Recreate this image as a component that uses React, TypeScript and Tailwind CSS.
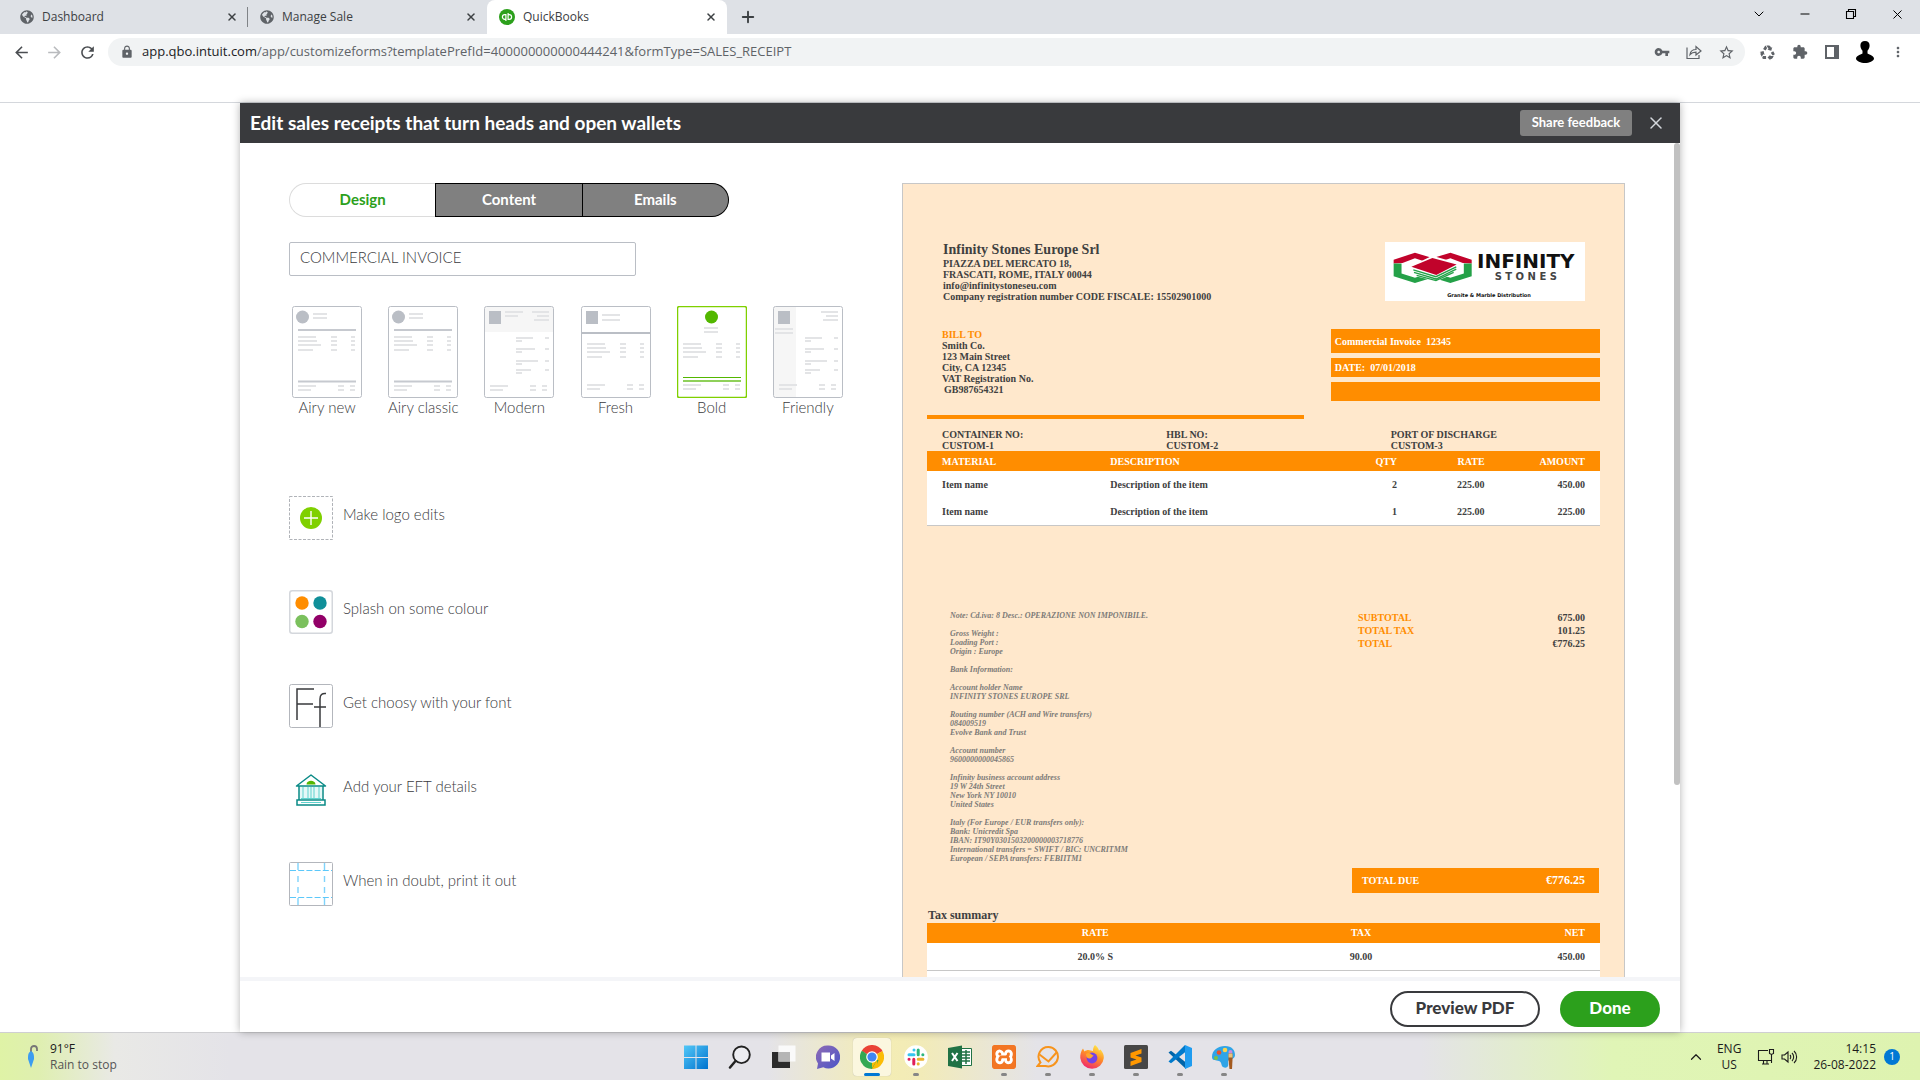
import React from 'react';
import {
  MdArrowBack,
  MdArrowForward,
  MdExtension,
  MdLock,
  MdMoreVert,
  MdRecycling,
  MdRefresh,
  MdStarBorder,
  MdVpnKey,
} from 'react-icons/md';
import { FaGlobeAmericas } from 'react-icons/fa';
import { SiXampp } from 'react-icons/si';
import { ChevronDown, ChevronUp, Minus, Plus, X } from 'lucide-react';

/* ---------- Browser ---------- */

function QuickBooksIcon() {
  return (
    <svg viewBox="0 0 16 16" className="size-4 shrink-0">
      <circle cx="8" cy="8" r="8" fill="#2ca01c" />
      <g fill="none" stroke="#fff" strokeWidth="1.2">
        <path d="M6.900 10.300H5.700a2.300 2.300 0 0 1 0-4.600h.6M6.900 5.100v6.900M9.100 5.700h1.200a2.300 2.300 0 0 1 0 4.600h-.6M9.100 10.900V4" />
      </g>
    </svg>
  );
}

function Tab({ title, kind }: { title: string; kind: 'first' | 'plain' | 'active' }) {
  return (
    <div
      className={
        kind === 'active'
          ? 'flex w-60 items-center rounded-t-lg bg-white pr-2 pl-3'
          : kind === 'first'
            ? 'flex w-[248px] items-center bg-[linear-gradient(#808387,#808387)] bg-[length:1px_20px] bg-right bg-no-repeat pr-2 pl-5'
            : 'flex w-[239px] items-center pr-2 pl-3'
      }
    >
      {kind === 'active' ? <QuickBooksIcon /> : <FaGlobeAmericas className="size-3.5 shrink-0 text-[#5f6368]" />}
      <span className="ml-2 flex-1 text-xs text-[#3c4043]">{title}</span>
      <button aria-label={'Close ' + title} className="flex size-4 items-center justify-center text-[#3c4043]">
        <X size={12} strokeWidth={3} />
      </button>
    </div>
  );
}

function TabStrip() {
  return (
    <div className="flex h-[34px] shrink-0 bg-[#dee1e6]">
      <Tab title="Dashboard" kind="first" />
      <Tab title="Manage Sale" kind="plain" />
      <Tab title="QuickBooks" kind="active" />
      <button aria-label="New tab" className="ml-3 text-[#3c4043]">
        <Plus size={18} strokeWidth={2.5} />
      </button>
      <div className="ml-auto flex h-7 items-center text-black">
        <button aria-label="Search tabs" className="flex w-[46px] justify-center">
          <ChevronDown size={16} strokeWidth={1.5} />
        </button>
        <button aria-label="Minimise" className="flex w-[46px] justify-center">
          <Minus size={14} strokeWidth={1.7} />
        </button>
        <button aria-label="Restore" className="flex w-[46px] justify-center">
          <svg viewBox="0 0 12 12" className="size-3" fill="none" stroke="currentColor" strokeWidth="1.1">
            <path d="M1.5 3.5h7v7h-7zM3.5 3.5v-2h7v7h-2" />
          </svg>
        </button>
        <button aria-label="Close window" className="flex w-[46px] justify-center">
          <X size={15} strokeWidth={1.6} />
        </button>
      </div>
    </div>
  );
}

function Toolbar() {
  return (
    <div className="flex h-9 shrink-0 items-center text-[#5f6368]">
      <div className="flex w-[108px] items-center gap-3.5 pl-3">
        <button aria-label="Back"><MdArrowBack size={19} className="text-[#4a4d51]" /></button>
        <button aria-label="Forward"><MdArrowForward size={19} className="text-[#b9bbbe]" /></button>
        <button aria-label="Reload"><MdRefresh size={19} className="text-[#4a4d51]" /></button>
      </div>
      <div className="flex h-7 flex-1 items-center rounded-full bg-[#f1f3f4] pr-2.5 pl-3">
        <MdLock size={14} />
        <span className="ml-2 flex-1 text-[13px]">
          <span className="text-[#202124]">app.qbo.intuit.com</span>
          /app/customizeforms?templatePrefId=400000000000444241&amp;formType=SALES_RECEIPT
        </span>
        <div className="flex items-center gap-4">
          <MdVpnKey size={16} />
          <svg viewBox="0 0 16 16" className="size-4" fill="none" stroke="currentColor" strokeWidth="1.2">
            <path d="M1 3.5V14.500h12V11M4 10.500c.5-3.500 2.500-5 6-5V2.500l5 4.500-5 4V8.200c-2.500 0-4.500.6-6 2.300z" />
          </svg>
          <MdStarBorder size={17} />
        </div>
      </div>
      <div className="flex items-center gap-4 pr-3.5 pl-3.5">
        <MdRecycling size={17} />
        <MdExtension size={16} />
        <svg viewBox="0 0 16 16" className="size-4" fill="none" stroke="currentColor" strokeWidth="2">
          <path d="M2 2h12v12H2z" />
          <path d="M10 2h4v12h-4z" fill="currentColor" stroke="none" />
        </svg>
        <svg viewBox="0 0 18 22" className="h-[22px] w-[18px] text-black" fill="currentColor">
          <path d="M9 0c3 0 4.800 1.700 4.600 4.800-.1 2-1 3.700-2.100 5v2.400c0 1.200 6.500 2 6.500 5.300C18 20 13 22 9 22s-9-2-9-4.500c0-3.300 6.500-4.100 6.500-5.300V9.800c-1.100-1.300-2-3-2.100-5C4.200 1.700 6 0 9 0z" />
        </svg>
        <MdMoreVert size={16} />
      </div>
    </div>
  );
}

/* ---------- Template thumbnails ---------- */

type Bar = [number, number, number];

const SHORT: Bar[] = [
  [6, 31, 18], [6, 35, 19], [6, 39, 23], [6, 44, 15],
  [39, 31, 6], [39, 35, 6], [39, 39, 6], [39, 44, 6],
  [59, 31, 4], [59, 35, 4], [59, 39, 4], [59, 44, 4],
];
const FOOT: Bar[] = [[6, 80, 18], [6, 84, 13], [46, 80, 6], [46, 84, 6], [58, 80, 5], [58, 84, 5]];
const SIDE: Bar[] = [
  [48, 6, 17], [53, 10, 12], [50, 14, 15],
  [32, 32, 17], [32, 35, 6], [32, 43, 19], [32, 46, 6],
  [32, 55, 22], [32, 58, 6], [32, 64, 15], [32, 67, 6],
  [61, 32, 4], [61, 43, 4], [61, 55, 4], [61, 64, 4],
];

function Bars({ items, dy = 0 }: { items: Bar[]; dy?: number }) {
  return (
    <g fill="#e3e4e6">
      {items.map(([x, y, w]) => (
        <rect key={x + '-' + y} x={x} y={y + dy - 1} width={w} height="2" />
      ))}
    </g>
  );
}

function Thumb({ name }: { name: string }) {
  const bold = name === 'Bold';
  return (
    <svg viewBox="0 0 70 92" className="h-[92px] w-[70px]">
      <rect x=".5" y=".5" width="69" height="91" rx="2" fill="#fff" />
      {name.startsWith('Airy') && (
        <>
          <circle cx="10.500" cy="11" r="6.500" fill="#babec5" />
          <Bars items={[[21, 8, 14], [21, 12, 14]]} />
          <path d="M6 24h58M6 75.500h58" stroke="#c6c9cf" strokeWidth="2" />
          <Bars items={SHORT} />
          <Bars items={FOOT} />
        </>
      )}
      {name === 'Modern' && (
        <>
          <path d="M1 1h68v25H1z" fill="#f6f6f6" />
          <path d="M5 5h12v13H5z" fill="#babec5" />
          <Bars items={[[21, 6, 18], [21, 10, 13]]} />
          <Bars items={SIDE} />
          <Bars items={FOOT} />
        </>
      )}
      {name === 'Fresh' && (
        <>
          <path d="M5 5h12v13H5z" fill="#babec5" />
          <Bars items={[[21, 9, 18], [21, 14, 18]]} />
          <path d="M0 27h70" stroke="#babec5" strokeWidth="2" />
          <Bars items={SHORT} dy={7} />
          <Bars items={FOOT} dy={-1} />
        </>
      )}
      {bold && (
        <>
          <circle cx="34.500" cy="11" r="6.500" fill="#53b700" />
          <Bars items={[[27, 22, 14], [27, 26, 14]]} />
          <Bars items={SHORT} dy={7} />
          <path d="M6 71.500h58" stroke="#53b700" />
          <path d="M6 75h58" stroke="#8fd05a" strokeWidth="2" />
          <Bars items={FOOT} dy={-1} />
        </>
      )}
      {name === 'Friendly' && (
        <>
          <path d="M1 1h22v90H1z" fill="#f6f6f6" />
          <path d="M5 5h12v13H5z" fill="#babec5" />
          <Bars items={[[2, 23, 18], [2, 27, 18]]} />
          <Bars items={SIDE} />
          <Bars items={FOOT} dy={-1} />
        </>
      )}
      <rect x=".5" y=".5" width="69" height="91" rx="2" fill="none" stroke={bold ? '#7fd000' : '#babec5'} strokeWidth={bold ? 1.5 : 1} />
    </svg>
  );
}

const TEMPLATES = ['Airy new', 'Airy classic', 'Modern', 'Fresh', 'Bold', 'Friendly'];

/* ---------- Design actions ---------- */

function LogoEditIcon() {
  return (
    <svg viewBox="0 0 44 44" className="size-11">
      <rect x=".5" y=".5" width="43" height="43" fill="none" stroke="#b0b3b8" strokeDasharray="3 1.500" />
      <circle cx="22" cy="22" r="11" fill="#7fd000" />
      <path d="M15 22h14M22 15v14" stroke="#fff" strokeWidth="1.400" />
    </svg>
  );
}

function ColourIcon() {
  return (
    <svg viewBox="0 0 44 44" className="size-11">
      <rect x=".75" y=".75" width="42.500" height="42.500" rx="2.500" fill="#fff" stroke="#d4d7dc" strokeWidth="1.500" />
      <circle cx="13" cy="13" r="6.700" fill="#ff8d00" />
      <circle cx="31" cy="13" r="6.700" fill="#108f99" />
      <circle cx="13" cy="31.500" r="6.700" fill="#7bc05d" />
      <circle cx="31" cy="31.500" r="6.700" fill="#920068" />
    </svg>
  );
}

function FontIcon() {
  return (
    <svg viewBox="0 0 44 44" className="size-11" fill="none">
      <rect x=".5" y=".5" width="43" height="43" rx="2" fill="#fff" stroke="#b3b6bc" />
      <g stroke="#393a3d" strokeWidth="1.500">
        <path d="M8 36V5h17M8 20h16M25 23h12" />
        <path d="M31 43V15c0-4 2-6 6-5.500" />
      </g>
    </svg>
  );
}

function BankIcon() {
  return (
    <svg viewBox="0 0 44 44" className="size-11" fill="none">
      <path d="M10 18h23v14H10z" fill="#e4f8f7" />
      <path d="M22 7 7.500 18h29z" fill="#fff" stroke="#0a8a86" strokeWidth="1.500" strokeLinejoin="round" />
      <path d="M17.500 16.500c0-5 9-5 9 0z" fill="#53b700" />
      <path d="M10 18v14M34 18v14M8 32h28v5H8z" stroke="#0a8a86" strokeWidth="1.500" />
      <path d="M14 19v12M19 19v12M22 19v12M25 19v12M30 19v12M12 30.500h20M12 34.500h20" stroke="#5fd3cf" />
    </svg>
  );
}

function PrintIcon() {
  return (
    <svg viewBox="0 0 44 44" className="size-11" fill="none">
      <rect x=".5" y=".5" width="43" height="43" rx="1" fill="#fff" stroke="#b3b6bc" />
      <path d="M1 8.500h42M1 35.500h42" stroke="#5cc8fa" strokeDasharray="6 2.200" strokeWidth="1.200" />
      <path d="M9 1v7M9 14v6M9 25v6M9 36v7M35.500 1v7M35.500 14v6M35.500 25v6M35.500 36v7" stroke="#7fd3fb" strokeWidth="1.400" />
    </svg>
  );
}

function DesignPanel() {
  return (
    <section>
      <div role="tablist" className="flex h-[34px] w-[440px] text-[15px] font-bold">
        <button role="tab" aria-selected="true" className="flex-1 rounded-l-full border border-r-0 border-[#dcdcdc] bg-white pb-0.5 text-[#2ca01c]">
          Design
        </button>
        <button role="tab" aria-selected="false" className="flex-1 border border-black bg-[#808080] pb-0.5 text-white">
          Content
        </button>
        <button role="tab" aria-selected="false" className="flex-1 rounded-r-full border border-l-0 border-black bg-[#808080] pb-0.5 text-white">
          Emails
        </button>
      </div>
      <input
        aria-label="Template name"
        defaultValue="COMMERCIAL INVOICE"
        className="mt-[25px] block h-[34px] w-[347px] rounded-[2px] border border-[#babec5] bg-white px-2.5 pb-1 text-[15px] font-light text-[#393a3d]"
      />
      <div className="mt-[30px] -ml-2.5 grid w-[577px] grid-cols-6 text-[15px] font-light text-[#393a3d]">
        {TEMPLATES.map((name) => (
          <button key={name} className="flex flex-col items-center whitespace-nowrap">
            <Thumb name={name} />
            <span className="leading-[18px]">{name}</span>
          </button>
        ))}
      </div>
      <div className="mt-20 flex flex-col items-start text-[15px] font-light text-[#393a3d]">
        <button className="mb-[50px] flex gap-2.5"><LogoEditIcon /><span className="leading-9">Make logo edits</span></button>
        <button className="mb-[50px] flex gap-2.5"><ColourIcon /><span className="leading-9">Splash on some colour</span></button>
        <button className="mb-10 flex gap-2.5"><FontIcon /><span className="leading-9">Get choosy with your font</span></button>
        <button className="mb-[50px] flex gap-2.5"><BankIcon /><span className="leading-9">Add your EFT details</span></button>
        <button className="flex gap-2.5"><PrintIcon /><span className="leading-9">When in doubt, print it out</span></button>
      </div>
    </section>
  );
}

/* ---------- Invoice preview ---------- */

function CompanyLogo() {
  return (
    <div className="flex h-[59px] w-[200px] flex-col items-center overflow-hidden bg-white text-[#111]">
      <div className="flex h-[50px] w-full items-center gap-1 pl-2">
        <svg viewBox="278 243 244 94" className="h-[31px] w-20 shrink-0">
          <path d="M280 266 345 245l56 17-22 11-34-11-38 14-27 2zM518 266 453 245l-56 17 22 11 34-11 38 14 27 2z" fill="#c1032b" />
          <path d="M280 278h24v30l41 13 28-9 22 10-50 15-65-20zM518 278h-24v30l-41 13-28-9-22 10 50 15 65-20z" fill="#24a148" />
          <path d="M328 288l70-34 82 24v24l-70 30-66-16z" fill="#fff" />
          <path d="M340 297l69 21 62-30M342 305l67 20 62-30M350 314l59 16 54-25" fill="none" stroke="#24a148" strokeWidth="4" />
          <path d="M334 288l64-27 74 20-62 32z" fill="#c1032b" />
        </svg>
        <div className="flex flex-col items-center font-['DejaVu_Sans'] font-bold">
          <span className="text-[20px] leading-5">INFINITY</span>
          <span className="text-[10px] leading-[12px] text-[#444]">S T O N E S</span>
        </div>
      </div>
      <span className="pl-2 font-['DejaVu_Sans'] text-[5px] leading-[7px] font-bold">Granite &amp; Marble Distribution</span>
    </div>
  );
}

const NOTES = `Note: Cd.iva: 8 Desc.: OPERAZIONE NON IMPONIBILE.

Gross Weight :
Loading Port :
Origin : Europe

Bank Information:

Account holder Name
INFINITY STONES EUROPE SRL

Routing number (ACH and Wire transfers)
084009519
Evolve Bank and Trust

Account number
9600000000045865

Infinity business account address
19 W 24th Street
New York NY 10010
United States

Italy (For Europe / EUR transfers only):
Bank: Unicredit Spa
IBAN: IT90Y0301503200000003718776
International transfers = SWIFT / BIC: UNCRITMM
European / SEPA transfers: FEBIITM1`;

function Invoice() {
  return (
    <article className="border border-[#c7c7c7] bg-[#ffe8cc] px-6 pt-[57px] pb-10 font-['Liberation_Serif'] text-[10px] leading-[11px] font-bold text-[#404040]">
      <header className="flex justify-between pr-[15px] pl-4">
        <div className="pt-px">
          <h2 className="text-sm leading-4">Infinity Stones Europe Srl</h2>
          <p>PIAZZA DEL MERCATO 18,</p>
          <p>FRASCATI, ROME, ITALY 00044</p>
          <p>info@infinitystoneseu.com</p>
          <p>Company registration number CODE FISCALE: 15502901000</p>
        </div>
        <div className="pt-px"><CompanyLogo /></div>
      </header>

      <div className="mt-[26px] flex items-start justify-between pt-px">
        <address className="pl-[15px] not-italic">
          <p className="text-[#ff8d00]">BILL TO</p>
          <p>Smith Co.</p>
          <p>123 Main Street</p>
          <p>City, CA 12345</p>
          <p>VAT Registration No.</p>
          <p className="pl-0.5">GB987654321</p>
        </address>
        <div className="flex w-2/5 flex-col gap-[5px] text-white">
          <p className="h-6 bg-[#ff8d00] px-1 leading-[26px] whitespace-pre">Commercial Invoice  12345</p>
          <p className="h-[19px] bg-[#ff8d00] px-1 leading-5 whitespace-pre">DATE:  07/01/2018</p>
          <p className="h-[19px] bg-[#ff8d00]" />
        </div>
      </div>

      <div className="mt-3.5 h-1 w-14/25 bg-[#ff8d00]" />

      <div className="mt-2.5 grid grid-cols-3 [&>p]:pl-[15px]">
        <p>CONTAINER NO:<br />CUSTOM-1</p>
        <p>HBL NO:<br />CUSTOM-2</p>
        <p>PORT OF DISCHARGE<br />CUSTOM-3</p>
      </div>

      <table className="w-full table-fixed border-b border-[#c7c7c7] bg-white text-right">
        <colgroup>
          <col className="w-1/4" />
          <col className="w-[30%]" />
          <col className="w-[15%]" />
          <col className="w-[13%]" />
          <col />
        </colgroup>
        <thead>
          <tr className="h-5 bg-[#ff8d00] text-white">
            <th className="pl-[15px] text-left">MATERIAL</th>
            <th className="pl-[15px] text-left">DESCRIPTION</th>
            <th className="pr-px">QTY</th>
            <th className="pr-px">RATE</th>
            <th className="pr-[15px]">AMOUNT</th>
          </tr>
        </thead>
        <tbody>
          {[['2', '450.00'], ['1', '225.00']].map(([qty, amount]) => (
            <tr key={qty} className="h-[27px]">
              <td className="pl-[15px] text-left">Item name</td>
              <td className="pl-[15px] text-left">Description of the item</td>
              <td className="pr-px">{qty}</td>
              <td className="pr-px">225.00</td>
              <td className="pr-[15px]">{amount}</td>
            </tr>
          ))}
        </tbody>
      </table>

      <div className="mt-[85px] flex items-start justify-between pr-[15px] pl-[23px]">
        <p className="text-[8px] leading-[9px] whitespace-pre text-[#7d7b78] italic">{NOTES}</p>
        <dl className="grid w-[227px] grid-cols-2 leading-[13px]">
          <dt className="text-[#ff8d00]">SUBTOTAL</dt>
          <dd className="text-right">675.00</dd>
          <dt className="text-[#ff8d00]">TOTAL TAX</dt>
          <dd className="text-right">101.25</dd>
          <dt className="text-[#ff8d00]">TOTAL</dt>
          <dd className="text-right">€776.25</dd>
        </dl>
      </div>

      <div className="mt-[5px] mr-px ml-auto flex h-[25px] w-[247px] items-center justify-between bg-[#ff8d00] pr-3.5 pl-2.5 text-white">
        <span>TOTAL DUE</span>
        <span className="text-xs">€776.25</span>
      </div>

      <h3 className="mt-3.5 pl-px text-xs leading-4">Tax summary</h3>
      <table className="w-full table-fixed bg-white text-center">
        <colgroup>
          <col className="w-1/2" />
          <col className="w-[29%]" />
          <col />
        </colgroup>
        <thead>
          <tr className="h-5 bg-[#ff8d00] text-white">
            <th>RATE</th>
            <th>TAX</th>
            <th className="pr-[15px] text-right">NET</th>
          </tr>
        </thead>
        <tbody>
          <tr className="h-7 border-b border-[#c7c7c7]">
            <td>20.0% S</td>
            <td>90.00</td>
            <td className="pr-[15px] text-right">450.00</td>
          </tr>
          <tr className="h-7">
            <td colSpan={3} />
          </tr>
        </tbody>
      </table>
    </article>
  );
}

/* ---------- Editor ---------- */

function Editor() {
  return (
    <main className="relative mx-auto flex w-3/4 flex-col bg-white font-['Lato'] shadow-[0_0_8px_rgba(0,0,0,0.3)]">
      <header className="flex h-10 shrink-0 items-center bg-[#393a3d] px-2.5 text-white">
        <h1 className="flex-1 text-[19px] font-bold">Edit sales receipts that turn heads and open wallets</h1>
        <button className="h-[26px] w-28 rounded-[3px] bg-[#808080] text-[13px] font-bold">Share feedback</button>
        <button aria-label="Close editor" className="mr-1 ml-3.5"><X size={20} strokeWidth={1.8} className="text-[#d4d7dc]" /></button>
      </header>
      <div className="relative min-h-0 flex-1 overflow-hidden">
        <div className="grid grid-cols-[613fr_723fr] pt-10 pr-[55px] pl-[49px]">
          <DesignPanel />
          <Invoice />
        </div>
        <div className="absolute top-0 right-0 h-[77%] w-1.5 rounded-full bg-[#c1c1c1]" />
      </div>
      <footer className="flex h-[55px] shrink-0 items-center justify-end gap-5 border-t-4 border-[#f4f5f8] pr-5 pb-0.5 text-[17px] font-black">
        <button className="mt-1.5 h-9 w-[150px] rounded-full border-2 border-[#393a3d] pb-0.5 text-[#393a3d]">Preview PDF</button>
        <button className="mt-1.5 h-9 w-[100px] rounded-full bg-[#2ca01c] pb-0.5 text-white">Done</button>
      </footer>
    </main>
  );
}

/* ---------- Taskbar ---------- */

function Glyph({ children }: { children: React.ReactNode }) {
  return <svg viewBox="0 0 24 24" className="size-6">{children}</svg>;
}

const APPS: { name: string; state?: 'open' | 'active'; icon: React.ReactNode }[] = [
  {
    name: 'Start',
    icon: (
      <Glyph>
        <defs><linearGradient id="win" x1="0" y1="0" x2="1" y2="1"><stop stopColor="#52c8f8" /><stop offset="1" stopColor="#0072ce" /></linearGradient></defs>
        <path d="M0 .5h11.500V12H0zM12.500.5H24V12H12.500zM0 13h11.500v11H0zM12.500 13H24v11H12.500z" fill="url(#win)" />
      </Glyph>
    ),
  },
  {
    name: 'Search',
    icon: (
      <Glyph><g fill="none" stroke="#222"><circle cx="13.500" cy="9.800" r="8.300" fill="#f4f4f6" fillOpacity=".6" strokeWidth="1.900" /><path d="M7.500 16 2 22.500" strokeWidth="2.500" strokeLinecap="round" /></g></Glyph>
    ),
  },
  {
    name: 'Task view',
    icon: (
      <Glyph><path d="M0 7h18v16H0z" fill="#2b2b2b" /><path d="M6.500.5h17v16h-17z" fill="#fafafa" /><path d="M6.500 7H18v9.500H6.500z" fill="#b5b5b5" /></Glyph>
    ),
  },
  {
    name: 'Chat',
    icon: (
      <Glyph>
        <defs><linearGradient id="chat" x1="0" y1="0" x2="1" y2="1"><stop stopColor="#8f6bb5" /><stop offset="1" stopColor="#4a55c8" /></linearGradient></defs>
        <path d="M12.500.5a11.500 11.500 0 1 1-5.200 21.700L1 24l1-5.500A11.500 11.500 0 0 1 12.500.5z" fill="url(#chat)" />
        <path d="M5.500 7.500h8.500v9H5.500zM15 10.500 18.500 8v8L15 13.500z" fill="#fff" />
      </Glyph>
    ),
  },
  {
    name: 'Chrome',
    state: 'active',
    icon: (
      <Glyph>
        <path d="M12 12 1.600 6A12 12 0 0 1 22.400 6z" fill="#ea4335" />
        <path d="M12 12V24A12 12 0 0 1 1.600 6z" fill="#34a853" />
        <path d="M12 12 22.400 6A12 12 0 0 1 12 24z" fill="#fbbc05" />
        <path d="M12 6.200h10.500L21 4H12z" fill="#ea4335" />
        <path d="m7 15-5.400-9 2.500 1L12 17zM17 15l-5.500 9 5-3 2-6z" fill="#34a853" />
        <path d="M17 15l-5 9 6-2z" fill="#fbbc05" />
        <circle cx="12" cy="12" r="5.800" fill="#fff" /><circle cx="12" cy="12" r="4.600" fill="#4285f4" />
      </Glyph>
    ),
  },
  {
    name: 'Slack',
    state: 'open',
    icon: (
      <Glyph>
        <circle cx="12" cy="12" r="11.800" fill="#fff" />
        <g strokeWidth="3" strokeLinecap="round">
          <path d="M10 5v.1M5 9.800h5" stroke="#36c5f0" /><path d="M14.200 5v4.800M18.800 9.800h.1" stroke="#2eb67d" />
          <path d="M14.200 14.200h4.700M14.200 18.800v.1" stroke="#ecb22e" /><path d="M9.800 14.200V19M5 14.200h.1" stroke="#e01e5a" />
        </g>
      </Glyph>
    ),
  },
  {
    name: 'Excel',
    icon: (
      <Glyph>
        <path d="M12 3.500h11.500v17H12z" fill="#fff" stroke="#207245" /><path d="M14 7h8M14 10h8M14 13h8M14 16h8M18 5v14" stroke="#207245" strokeWidth="1.500" />
        <path d="M0 3 14 .5v23L0 21z" fill="#207245" />
        <path d="m4 8 5.500 8M9.500 8 4 16" stroke="#fff" strokeWidth="2" />
      </Glyph>
    ),
  },
  {
    name: 'XAMPP',
    state: 'open',
    icon: (
      <span className="flex size-6 items-center justify-center rounded-sm border border-[#c25412] bg-white">
        <SiXampp className="size-6 shrink-0 text-[#f37623]" />
      </span>
    ),
  },
  {
    name: 'eM Client',
    state: 'open',
    icon: (
      <Glyph><g fill="none" stroke="#f7941d" strokeWidth="2"><path d="M12.500 2a9.700 9.700 0 1 1-3 19L1.500 21l3-3.500A9.700 9.700 0 0 1 12.500 2z" /><path d="m3.500 9.500 9 7L21 7" /></g></Glyph>
    ),
  },
  {
    name: 'Firefox',
    state: 'open',
    icon: (
      <Glyph>
        <defs><linearGradient id="fox" x1=".8" y1="0" x2=".3" y2="1"><stop stopColor="#fff04d" /><stop offset=".45" stopColor="#ff9326" /><stop offset="1" stopColor="#f0256f" /></linearGradient></defs>
        <path d="M15 0c2 1.500 3.500 3.500 4 5.500l1.500-1C23 7.500 24 10 23.800 13A11.800 11.800 0 0 1 .3 13C0 9.500 1 6 3 3.500l1.500 3c1-1 2.500-1.500 4-1.500L13 6c0-2.500.5-4.500 2-6z" fill="url(#fox)" />
        <circle cx="12" cy="13" r="5.400" fill="#7542e5" /><path d="M6 9c2-1.500 4-1 5.500.5L14 11c-2 0-2 2.500-4.500 2.500C7.500 13.500 6 12 6 9z" fill="#ffa52e" />
      </Glyph>
    ),
  },
  {
    name: 'Sublime Text',
    state: 'open',
    icon: <Glyph><rect width="24" height="24" rx="1.500" fill="#474747" /><path d="m6.500 8 11-4v4.500l-6 2 6 2V17l-11 4v-4.500l6-2-6-2z" fill="#ff9800" /></Glyph>,
  },
  {
    name: 'Visual Studio Code',
    state: 'open',
    icon: (
      <Glyph>
        <path d="M.5 7.500 3 5.800 18 17.500V24z" fill="#0065a9" />
        <path d="M.5 16.500 17 0l1 6.500L3 18.200z" fill="#007acc" /><path d="M17 0l7 3v18l-7 3z" fill="#1f9cf0" />
      </Glyph>
    ),
  },
  {
    name: 'Paint',
    state: 'open',
    icon: (
      <Glyph>
        <path d="M13 1c7 0 10 4 10 9 0 4-4 4-6 5s0 4-1 6-3 2-5 1-1-5-4-6-7 0-7-4C0 5 6 1 13 1z" fill="#2fa4e7" />
        <circle cx="13" cy="5" r="2.300" fill="#fbd44b" /><circle cx="7" cy="7.500" r="2.300" fill="#e8522c" /><circle cx="4" cy="13" r="2" fill="#7cc243" /><circle cx="18.500" cy="7" r="2" fill="#c98be0" />
        <path d="M16.500 8.500h4V15l-.5 9h-2.500L16.500 15z" fill="#a35a1f" /><path d="M16.500 8.500h4v4h-4z" fill="#e8c27a" />
      </Glyph>
    ),
  },
];

function Taskbar() {
  return (
    <div className="grid h-12 shrink-0 grid-cols-[1fr_auto_1fr] items-center border-t border-[#cfcfd2] bg-[linear-gradient(90deg,#dff3a6_0%,#dfefb0_2%,#e9e9e6_6%,#e4e3e8_12%,#e4e3e8_40%,#f4edb4_46%,#f2ebb8_48%,#e4e3e8_54%,#e4e3e8_74%,#e0f5b6_84%,#def3b0_100%)] text-xs text-[#1b1b1b]">
      <div className="flex items-center gap-3 pl-[26px]">
        <svg viewBox="0 0 12 24" className="h-6 w-3" fill="none">
          <path d="M5 7V4c0-4 6-4 6 0v2" stroke="#777" strokeWidth="1.800" />
          <path d="M5 6c3 2 3 4 3 8l-3 9-3-9c0-4 0-6 3-8z" fill="#3c9df0" />
        </svg>
        <div className="leading-4">
          <p>91°F</p>
          <p className="text-[#555]">Rain to stop</p>
        </div>
      </div>
      <nav className="flex">
        {APPS.map(({ name, state, icon }) => (
          <button
            key={name}
            aria-label={name}
            className={
              state === 'active'
                ? 'relative mx-[3px] flex h-[38px] w-[38px] items-center justify-center rounded-[4px] bg-[#fbf7df] shadow-[0_0_1px_#aaa]'
                : 'relative mx-[3px] flex h-[38px] w-[38px] items-center justify-center'
            }
          >
            {icon}
            {state === 'active' && <span className="absolute bottom-0 h-[3px] w-4 rounded-full bg-[#0078d4]" />}
            {state === 'open' && <span className="absolute bottom-0 h-[3px] w-1.5 rounded-full bg-[#868686]" />}
          </button>
        ))}
      </nav>
      <div className="flex items-center justify-end pr-5">
        <ChevronUp size={18} strokeWidth={1.6} />
        <p className="ml-3 text-center leading-4">ENG<br />US</p>
        <svg viewBox="0 0 18 16" className="ml-4 h-4 w-[18px]" fill="none" stroke="currentColor" strokeWidth="1.100">
          <path d="M11 1.500H1.500v10h13V7M5 15h7M6.500 11.500V15M10 11.500V15M12.500.5h4v4l-2 1-2-1zM14.500 5.500V14" />
        </svg>
        <svg viewBox="0 0 18 16" className="ml-1.5 h-4 w-[18px]" fill="none" stroke="currentColor" strokeWidth="1.100">
          <path d="M1 6v4h2.500L7 13V3L3.500 6zM9 6c1 1 1 3 0 4M11 4c2.200 2 2.200 6 0 8M13 2c3.500 3 3.500 9 0 12" />
        </svg>
        <p className="ml-3.5 text-right leading-4">14:15<br />26-08-2022</p>
        <span className="ml-2 flex size-4 items-center justify-center rounded-full bg-[#0078d4] text-[10px] text-white">1</span>
      </div>
    </div>
  );
}

export default function App() {
  return (
    <div className="flex h-screen flex-col overflow-hidden bg-white font-['Open_Sans',sans-serif]">
      <TabStrip />
      <Toolbar />
      <div className="mt-8 flex min-h-0 flex-1 border-t border-[#d4d7dc]">
        <Editor />
      </div>
      <Taskbar />
    </div>
  );
}
